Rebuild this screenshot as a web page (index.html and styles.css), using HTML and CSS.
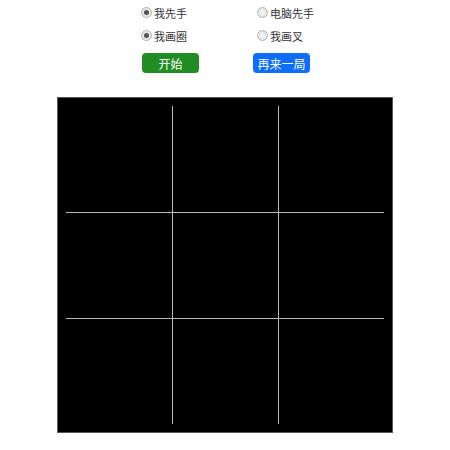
FILE: index.html
```html
<!DOCTYPE html>
<html lang="zh">
<head>
    <meta charset="UTF-8">
    <title>井字棋</title>
    <link rel="stylesheet" href="styles.css">
</head>
<body>
    <div class="controls">
        <label class="opt"><input type="radio" name="first" value="me" checked>我先手</label>
        <label class="opt"><input type="radio" name="first" value="pc">电脑先手</label>
        <label class="opt"><input type="radio" name="mark" value="o" checked>我画圈</label>
        <label class="opt"><input type="radio" name="mark" value="x">我画叉</label>
        <div class="cell"><button class="btn btn-start">开始</button></div>
        <div class="cell cell-again"><button class="btn btn-again">再来一局</button></div>
    </div>

    <div class="board">
        <svg width="334" height="334" viewBox="0 0 334 334">
            <g stroke="#b8b8b8" stroke-width="1">
                <line x1="114.5" y1="8" x2="114.5" y2="326"/>
                <line x1="220.5" y1="8" x2="220.5" y2="326"/>
                <line x1="8" y1="114.5" x2="326" y2="114.5"/>
                <line x1="8" y1="220.5" x2="326" y2="220.5"/>
            </g>
        </svg>
    </div>
</body>
</html>
```

FILE: styles.css
```css
body {
    margin: 0;
    font-family: "Noto Sans CJK SC", "Liberation Sans", sans-serif;
    font-size: 11px;
    color: #333;
    background: #fff;
}
.controls {
    display: grid;
    grid-template-columns: 116px 116px;
    grid-auto-rows: 23px;
    width: 232px;
    margin: 0 0 0 141px;
    padding-top: 1px;
}
.opt {
    display: flex;
    align-items: center;
    gap: 2px;
}
.opt input {
    appearance: none;
    width: 11px;
    height: 11px;
    margin: 0;
    border: 1px solid #b4b4b4;
    border-radius: 50%;
    background: radial-gradient(circle, #f4f4f4 0, #dedede 100%);
    display: grid;
    place-items: center;
}
.opt input:checked::after {
    content: "";
    width: 5px;
    height: 5px;
    border-radius: 50%;
    background: #555;
}
.cell {
    padding-top: 6px;
    padding-left: 1px;
}
.cell-again {
    margin-left: -5px;
}
.btn {
    width: 57px;
    height: 20px;
    padding: 0;
    border: none;
    border-radius: 4px;
    color: #fff;
    font-family: inherit;
    font-size: 12px;
    cursor: pointer;
}
.btn-start {
    background-color: #218c23;
}
.btn-again {
    background-color: #0d6efd;
}
.board {
    width: 334px;
    height: 334px;
    margin: 27px auto 0;
    border: 1px solid #555;
    background: #000;
}
.board svg {
    display: block;
}
```
